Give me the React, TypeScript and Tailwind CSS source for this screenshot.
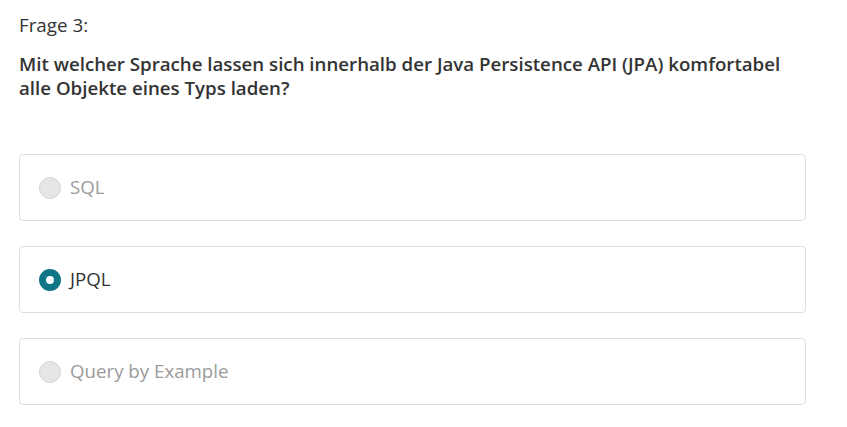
import React, { useState } from 'react';

const options = ['SQL', 'JPQL', 'Query by Example'];

const App = () => {
  const [selected, setSelected] = useState<number>(1);

  return (
    <div
      className="w-[847px] h-[427px] bg-white pl-[19px] pt-[12px] text-[#333]"
      style={{ fontFamily: '"Open Sans", sans-serif' }}
    >
      <div className="text-[18.8px] leading-[26px]">Frage 3:</div>
      <div className="mt-[14px] w-[780px] text-[18.7px] leading-[24px] font-semibold">
        Mit welcher Sprache lassen sich innerhalb der Java Persistence API (JPA) komfortabel alle Objekte eines
        Typs laden?
      </div>
      <div className="mt-[54px] flex w-[787px] flex-col gap-[25px]">
        {options.map((opt, i) => {
          const active = selected === i;
          return (
            <button
              key={opt}
              onClick={() => setSelected(i)}
              className="flex h-[67px] items-center rounded-[4px] border border-[#dedede] bg-white pl-[19px] text-left"
            >
              {active ? (
                <span className="box-border h-[22px] w-[22px] shrink-0 rounded-full border-[7px] border-[#107585] bg-white" />
              ) : (
                <span className="box-border h-[22px] w-[22px] shrink-0 rounded-full border border-[#d4d4d4] bg-[#e6e6e6]" />
              )}
              <span className={`ml-[9px] text-[18.7px] ${active ? 'text-[#333]' : 'text-[#9b9b9b]'}`}>{opt}</span>
            </button>
          );
        })}
      </div>
    </div>
  );
};

export default App;
